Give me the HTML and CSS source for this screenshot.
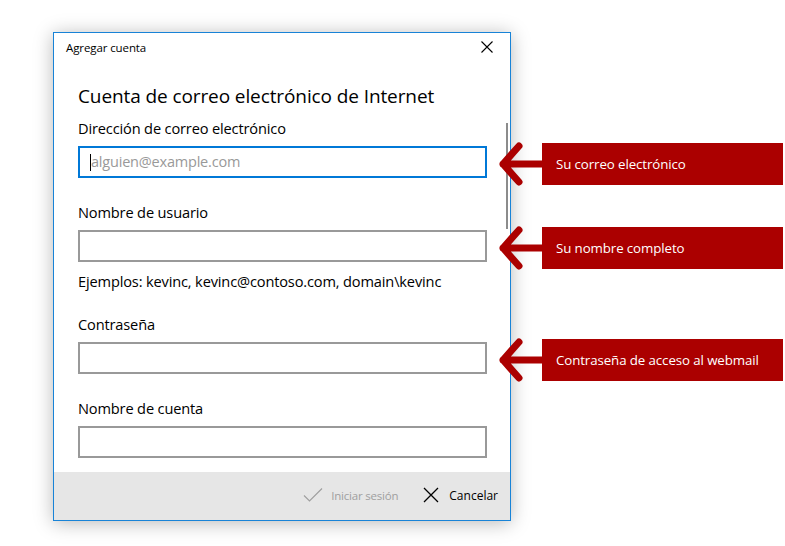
FILE: index.html
```html
<!DOCTYPE html>
<html lang="es">
<head>
<meta charset="utf-8">
<title>Agregar cuenta</title>
<link rel="stylesheet" href="styles.css">
</head>
<body>
<div class="stage">
  <div class="window">
    <div class="titlebar">
      <span class="title">Agregar cuenta</span>
      <svg class="close" width="12" height="12" viewBox="0 0 12 12"><path d="M0.5 0.5 L11.5 11.5 M11.5 0.5 L0.5 11.5" stroke="#000" stroke-width="1.1" fill="none"/></svg>
    </div>
    <div class="content">
      <h1 class="heading">Cuenta de correo electrónico de Internet</h1>
      <div class="label first">Dirección de correo electrónico</div>
      <div class="field focused"><span class="caret"></span><span class="placeholder">alguien@example.com</span></div>
      <div class="label">Nombre de usuario</div>
      <div class="field"></div>
      <div class="hint">Ejemplos: kevinc, kevinc@contoso.com, domain\kevinc</div>
      <div class="label after-hint">Contraseña</div>
      <div class="field"></div>
      <div class="label">Nombre de cuenta</div>
      <div class="field"></div>
      <div class="scrollbar"></div>
    </div>
    <div class="footer">
      <div class="btn disabled">
        <svg width="20" height="16" viewBox="0 0 20 16"><path d="M1 8.5 L6.5 14 L19 1.5" stroke="#a0a0a0" stroke-width="1.2" fill="none"/></svg>
        <span>Iniciar sesión</span>
      </div>
      <div class="btn cancel">
        <svg width="16" height="16" viewBox="0 0 16 16"><path d="M1 1 L15 15 M15 1 L1 15" stroke="#000" stroke-width="1.3" fill="none"/></svg>
        <span>Cancelar</span>
      </div>
    </div>
  </div>

  <div class="note n1">
    <svg class="arrow" width="44" height="44" viewBox="0 0 44 44"><path d="M20 4 L4 22 L20 40 M4 22 L44 22" stroke="#ab0000" stroke-width="7" stroke-linecap="round" stroke-linejoin="round" fill="none"/></svg>
    <div class="box">Su correo electrónico</div>
  </div>
  <div class="note n2">
    <svg class="arrow" width="44" height="44" viewBox="0 0 44 44"><path d="M20 4 L4 22 L20 40 M4 22 L44 22" stroke="#ab0000" stroke-width="7" stroke-linecap="round" stroke-linejoin="round" fill="none"/></svg>
    <div class="box">Su nombre completo</div>
  </div>
  <div class="note n3">
    <svg class="arrow" width="44" height="44" viewBox="0 0 44 44"><path d="M20 4 L4 22 L20 40 M4 22 L44 22" stroke="#ab0000" stroke-width="7" stroke-linecap="round" stroke-linejoin="round" fill="none"/></svg>
    <div class="box">Contraseña de acceso al webmail</div>
  </div>
</div>
</body>
</html>
```
FILE: styles.css
```css
* { box-sizing: border-box; }
html, body { margin: 0; padding: 0; background: #fff; }
body {
  font-family: "Open Sans", "Noto Sans", sans-serif;
  color: #000;
  width: 785px;
  height: 546px;
  overflow: hidden;
}
.stage { position: relative; width: 785px; height: 546px; padding: 32px 0 0 53px; }

.window {
  width: 458px;
  height: 489px;
  border: 1px solid #1883d7;
  background: #fff;
  box-shadow: 0 2px 18px rgba(0,0,0,0.28);
  display: flex;
  flex-direction: column;
}
.titlebar {
  height: 28px;
  flex: none;
  display: flex;
  align-items: center;
  justify-content: space-between;
  padding: 0 17px 0 12px;
}
.title { font-size: 11.5px; letter-spacing: -0.1px; }
.close { display: block; }

.content {
  position: relative;
  flex: 1;
  overflow: hidden;
  padding: 23px 23px 0 24px;
}
.heading {
  margin: 0;
  font-weight: 400;
  font-size: 19px;
  line-height: 24px;
  letter-spacing: -0.1px;
}
.label, .hint {
  font-size: 14.6px;
  line-height: 20px;
  margin-top: 24px;
  margin-bottom: 8px;
  letter-spacing: -0.15px;
}
.label.first { margin-top: 10px; }
.hint { margin-top: 9px; margin-bottom: 0; }
.label.after-hint { margin-top: 23px; }
.field {
  height: 32px;
  border: 2px solid #999;
  display: flex;
  align-items: center;
  padding-left: 10px;
}
.field.focused { border-color: #0078d7; }
.caret { width: 1px; height: 17px; background: #000; margin-right: 0; }
.placeholder { color: #999; font-size: 14.5px; letter-spacing: -0.2px; margin-top: -1px; }

.scrollbar {
  position: absolute;
  right: 2px;
  top: 62px;
  width: 2px;
  height: 106px;
  background: #8c8c8c;
}

.footer {
  height: 48px;
  flex: none;
  background: #e6e6e6;
  display: flex;
  align-items: center;
  justify-content: flex-end;
  padding: 0 12px 2px 0;
  gap: 25px;
}
.btn { display: flex; align-items: center; gap: 8px; font-size: 11.5px; letter-spacing: -0.2px; }
.btn.cancel { gap: 10px; font-size: 12px; letter-spacing: 0; }
.btn svg { display: block; }
.btn.disabled { color: #a0a0a0; }

.note {
  position: absolute;
  left: 499px;
  display: flex;
  align-items: center;
}
.n1 { top: 142px; }
.n2 { top: 226px; }
.n3 { top: 338px; }
.arrow { display: block; margin-right: -1px; }
.box {
  width: 241px;
  height: 42px;
  background: #ab0000;
  color: #fff;
  font-size: 13.3px;
  letter-spacing: -0.1px;
  display: flex;
  align-items: center;
  padding-left: 14px;
}
```
